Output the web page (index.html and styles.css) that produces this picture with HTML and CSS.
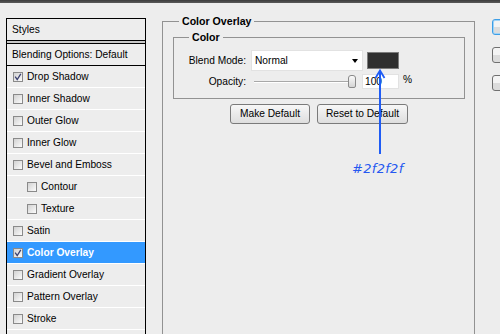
FILE: index.html
```html
<!DOCTYPE html>
<html>
<head>
<meta charset="utf-8">
<link rel="stylesheet" href="styles.css">
</head>
<body>
<div class="topbar"></div>
<div class="main">
  <div class="styles-panel">
    <div class="panel-head">Styles</div>
    <div class="head-sep"></div>
    <div class="blend-row">Blending Options: Default</div>
    <div class="item"><span class="cb checked"><svg viewBox="0 0 10 10" width="10" height="10"><path d="M2.2 4.6 L4.2 7.6 L7.8 1.8" fill="none" stroke="#3b4170" stroke-width="1.3"/></svg></span>Drop Shadow</div>
    <div class="item"><span class="cb"></span>Inner Shadow</div>
    <div class="item"><span class="cb"></span>Outer Glow</div>
    <div class="item"><span class="cb"></span>Inner Glow</div>
    <div class="item"><span class="cb"></span>Bevel and Emboss</div>
    <div class="item sub"><span class="cb"></span>Contour</div>
    <div class="item sub"><span class="cb"></span>Texture</div>
    <div class="item"><span class="cb"></span>Satin</div>
    <div class="item selected"><span class="cb checked"><svg viewBox="0 0 10 10" width="10" height="10"><path d="M2.2 4.6 L4.2 7.6 L7.8 1.8" fill="none" stroke="#3b4170" stroke-width="1.3"/></svg></span>Color Overlay</div>
    <div class="item"><span class="cb"></span>Gradient Overlay</div>
    <div class="item"><span class="cb"></span>Pattern Overlay</div>
    <div class="item"><span class="cb"></span>Stroke</div>
    <div class="item"></div>
  </div>

  <fieldset class="outer">
    <legend>Color Overlay</legend>
    <fieldset class="inner">
      <legend>Color</legend>
      <div class="row blend">
        <div class="label">Blend Mode:</div>
        <div class="select"><span>Normal</span><span class="arrow"></span></div>
        <div class="swatch"></div>
      </div>
      <div class="row opacity">
        <div class="label">Opacity:</div>
        <div class="slider"><div class="track"></div><div class="thumb"></div></div>
        <div class="input">100</div>
        <div class="pct">%</div>
      </div>
    </fieldset>
    <div class="buttons">
      <div class="btn make">Make Default</div>
      <div class="btn reset">Reset to Default</div>
    </div>
  </fieldset>

  <div class="side-buttons">
    <div class="sbtn focused"></div>
    <div class="sbtn"></div>
    <div class="sbtn"></div>
  </div>
</div>

<svg class="annot-arrow" width="20" height="90" viewBox="0 0 20 90">
  <path d="M10 3 L10 86" stroke="#1f5cf5" stroke-width="2" fill="none"/>
  <path d="M5.5 10 L10 2.5 L14.5 10" stroke="#1f5cf5" stroke-width="1.8" fill="none"/>
</svg>
<div class="annot-text">#2f2f2f</div>
</body>
</html>
```
FILE: styles.css
```css
html, body {
  margin: 0;
  padding: 0;
}
body {
  width: 500px;
  height: 334px;
  overflow: hidden;
  background: #ededed;
  font-family: "Liberation Sans", Arial, sans-serif;
  font-size: 10.2px;
  color: #000;
  position: relative;
}
.topbar {
  height: 3px;
  background: linear-gradient(#3c3c3c, #5a5a5a);
}
.main {
  display: flex;
  align-items: flex-start;
  padding-top: 12px;
  width: 560px;
}
.styles-panel {
  margin-left: 6px;
  margin-top: 3px;
  width: 138px;
  height: 330px;
  border: 1px solid #000;
  border-bottom: none;
  background: #ededed;
  flex-shrink: 0;
}
.panel-head {
  height: 21px;
  line-height: 21px;
  padding-left: 5px;
  border-bottom: 1px solid #000;
}
.head-sep {
  height: 2px;
  background: #c8c8c8;
  border-bottom: 1px solid #000;
}
.blend-row {
  height: 21px;
  line-height: 21px;
  padding-left: 5px;
  border-bottom: 1px solid #000;
}
.item {
  height: 21px;
  border-bottom: 1px solid #fff;
  display: flex;
  align-items: center;
  padding-left: 6px;
  gap: 4px;
}
.item.sub {
  padding-left: 20px;
}
.item.selected {
  background: #3399ff;
  color: #fff;
  font-weight: bold;
}
.cb {
  width: 8px;
  height: 8px;
  border: 1px solid #8a8a8a;
  background: linear-gradient(135deg, #d2d2d2, #fbfbfb);
  position: relative;
  flex-shrink: 0;
}
.cb svg {
  position: absolute;
  left: -1px;
  top: -1px;
}

fieldset {
  margin: 0;
  border: 1px solid #929292;
  min-width: 0;
}
legend {
  font-weight: bold;
  font-size: 10.6px;
  line-height: 12px;
  padding: 0 3px;
}
.outer {
  margin-left: 16px;
  width: 292px;
  padding: 4px 9px 0 10px;
  height: 340px;
  box-sizing: content-box;
  border-bottom: none;
  flex-shrink: 0;
}
.outer > legend {
  margin-left: 6px;
}
.inner {
  width: 290px;
  padding: 0 0 9px 0;
  box-sizing: content-box;
}
.inner > legend {
  margin-left: 15px;
}
.row {
  display: flex;
  align-items: center;
}
.label {
  width: 72px;
  text-align: right;
  flex-shrink: 0;
}
.row.blend {
  margin-top: 7px;
  height: 21px;
}
.select {
  margin-left: 5px;
  height: 19px;
  background: #fff;
  border: 1px solid #e2e2e2;
  display: flex;
  align-items: center;
  justify-content: space-between;
  padding-left: 3px;
  padding-right: 4px;
  box-sizing: content-box;
  width: 103px;
}
.arrow {
  width: 0;
  height: 0;
  border-left: 3.5px solid transparent;
  border-right: 3.5px solid transparent;
  border-top: 4px solid #000;
  margin-top: 1px;
}
.swatch {
  margin-left: 4px;
  width: 30px;
  height: 15px;
  border: 1px solid #7c7c7c;
  background: #2f2f2f;
}
.row.opacity {
  margin-top: 3px;
  height: 15px;
}
.slider {
  margin-left: 8px;
  width: 102px;
  height: 15px;
  position: relative;
}
.track {
  position: absolute;
  left: 0;
  right: 4px;
  top: 7px;
  height: 1px;
  background: #a8a8a8;
  border-bottom: 1px solid #fff;
}
.thumb {
  position: absolute;
  left: 94px;
  top: 1px;
  width: 6px;
  height: 11px;
  border: 1px solid #8a8a8a;
  border-radius: 3px 3px 2px 2px;
  background: linear-gradient(#fafafa, #d4d4d4);
}
.input {
  margin-left: 6px;
  width: 33px;
  height: 13px;
  line-height: 13px;
  background: #fff;
  border: 1px solid #e2e2e2;
  padding-left: 2px;
}
.pct {
  margin-left: 4px;
  margin-top: -4px;
}
.buttons {
  display: flex;
  justify-content: center;
  gap: 7px;
  margin-top: 5px;
}
.btn {
  height: 18px;
  line-height: 18px;
  border: 1px solid #7a7a7a;
  border-radius: 3px;
  background: linear-gradient(#f7f7f7, #dedede);
  text-align: center;
}
.btn.make { width: 78px; }
.btn.reset { width: 89px; }
.side-buttons {
  margin-left: 17px;
  margin-top: 4px;
  display: flex;
  flex-direction: column;
  gap: 12px;
  flex-shrink: 0;
}
.sbtn {
  width: 40px;
  height: 14px;
  border: 1px solid #707070;
  border-radius: 3px;
  background: linear-gradient(#f4f4f4 50%, #dcdcdc 50%);
  flex-shrink: 0;
}
.sbtn.focused {
  border-color: #3c9ee6;
  box-shadow: inset 0 0 0 1px #9fd3f7;
}
.annot-arrow {
  position: absolute;
  left: 369.5px;
  top: 68px;
}
.annot-text {
  position: absolute;
  left: 352px;
  top: 161px;
  font-family: "DejaVu Sans", sans-serif;
  font-style: italic;
  font-size: 13px;
  color: #2558f0;
  letter-spacing: 0.3px;
}
```
